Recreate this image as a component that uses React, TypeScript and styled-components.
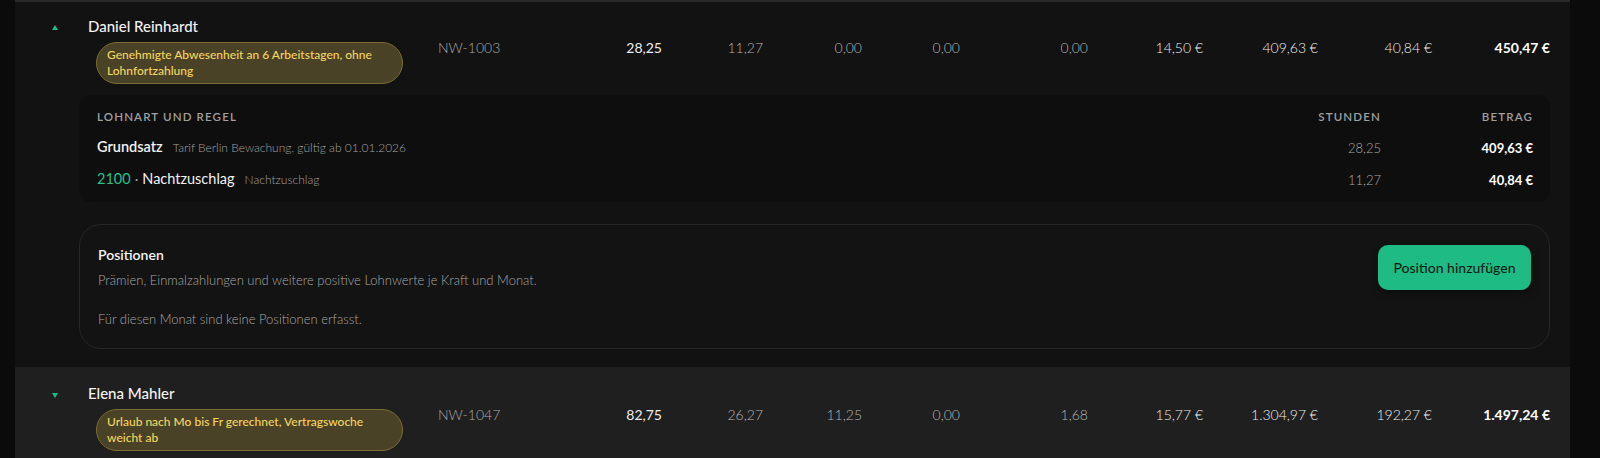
import React from "react";
import styled, { createGlobalStyle } from "styled-components";

const GlobalStyle = createGlobalStyle`
  html, body {
    margin: 0;
    padding: 0;
    background: #0b0b0b;
    overflow: hidden;
  }
  body {
    font-family: "Lato", "Noto Sans", sans-serif;
    color: #f0f0f0;
  }
  * { box-sizing: border-box; }
`;

const Page = styled.div`
  width: 1600px;
  height: 458px;
  padding: 0 30px 0 15px;
  background: #0b0b0b;
  overflow: hidden;
`;

const Table = styled.div`
  border-top: 2px solid #2a2a2a;
  display: flex;
  flex-direction: column;
`;

const Block = styled.div<{ $active?: boolean }>`
  background: ${(p) => (p.$active ? "#1f1f1f" : "#121212")};
`;

const MainRow = styled.div<{ $top: number }>`
  display: grid;
  grid-template-columns: 73px 350px 120px 104px 101px 99px 98px 128px 115px 115px 114px 118px;
  align-items: start;
  padding: ${(p) => p.$top}px 20px 11px 0;
`;

const ToggleCell = styled.div`
  padding: 9px 0 0 37px;
  height: 20px;
  display: flex;
`;

const NameCell = styled.div`
  display: flex;
  flex-direction: column;
  gap: 6px;
  align-items: flex-start;
`;

const Name = styled.div`
  font-size: 15px;
  line-height: 20px;
  font-weight: 500;
  color: #f3f3f3;
`;

const Badge = styled.div`
  width: 307px;
  margin-left: 8px;
  padding: 4px 10px;
  border-radius: 21px;
  border: 1px solid #7b6c33;
  background: #4a4227;
  color: #f4d562;
  font-size: 12px;
  line-height: 16px;
  font-weight: 500;
`;

const Code = styled.div`
  padding-top: 22px;
  font-size: 14px;
  line-height: 20px;
  color: #a9a9a9;
  font-weight: 300;
`;

const Num = styled.div<{ $tone: "strong" | "muted" | "money" | "total" }>`
  padding-top: 22px;
  line-height: 20px;
  text-align: right;
  font-size: 14px;
  font-variant-numeric: tabular-nums;
  color: ${(p) =>
    p.$tone === "muted" ? "#b4b4b4" : p.$tone === "total" ? "#ffffff" : "#ededed"};
  font-weight: ${(p) =>
    p.$tone === "total" ? 700 : p.$tone === "strong" ? 400 : 300};
`;

const Details = styled.div`
  display: flex;
  flex-direction: column;
  gap: 22px;
  padding: 0 20px 18px 64px;
`;

const RulesCard = styled.div`
  background: #0e0e0e;
  border-radius: 12px;
  padding: 15px 17px 12px 18px;
  display: grid;
  grid-template-columns: 1fr 150px 152px;
  row-gap: 11px;
  align-items: center;
`;

const HeadCell = styled.div<{ $right?: boolean }>`
  font-size: 11.5px;
  line-height: 14px;
  letter-spacing: 0.1em;
  text-transform: uppercase;
  font-weight: 600;
  color: #a0a0a0;
  text-align: ${(p) => (p.$right ? "right" : "left")};
  margin-bottom: 2px;
`;

const RuleLabel = styled.div`
  display: flex;
  align-items: baseline;
  line-height: 20px;
`;

const RuleTitle = styled.span<{ $bold?: boolean }>`
  font-size: 14.5px;
  color: #f2f2f2;
  font-weight: ${(p) => (p.$bold ? 600 : 400)};
`;

const RuleCode = styled.span`
  font-size: 14.5px;
  color: #22c28a;
`;

const Dot = styled.span`
  font-size: 14px;
  color: #9a9a9a;
  margin: 0 4px;
`;

const RuleDesc = styled.span`
  font-size: 12px;
  color: #a2a2a2;
  margin-left: 10px;
  font-weight: 300;
`;

const RuleHours = styled.div`
  text-align: right;
  font-size: 13px;
  color: #a8a8a8;
  font-weight: 300;
`;

const RuleAmount = styled.div`
  text-align: right;
  font-size: 13px;
  color: #ffffff;
  font-weight: 700;
`;

const PositionsCard = styled.div`
  border: 1px solid #262626;
  border-radius: 22px;
  background: #131313;
  padding: 20px 18px 20px 18px;
  display: flex;
  justify-content: space-between;
  align-items: flex-start;
`;

const PosText = styled.div`
  display: flex;
  flex-direction: column;
`;

const PosTitle = styled.div`
  font-size: 14px;
  line-height: 20px;
  font-weight: 600;
  color: #f3f3f3;
`;

const PosSub = styled.div<{ $gap: number }>`
  font-size: 13px;
  line-height: 18px;
  color: #a6a6a6;
  font-weight: 300;
  margin-top: ${(p) => p.$gap}px;
`;

const AddButton = styled.button`
  width: 153px;
  height: 45px;
  border: none;
  border-radius: 10px;
  background: #1fbb84;
  color: #0b1f15;
  font-family: inherit;
  font-size: 14px;
  font-weight: 500;
  box-shadow: 0 4px 10px rgba(0, 0, 0, 0.35);
  cursor: pointer;
`;

const Triangle = ({ up }: { up: boolean }) => (
  <svg width="6" height="5" viewBox="0 0 6 5" style={{ marginTop: up ? 0 : 1 }}>
    <path d={up ? "M3 0 L6 5 L0 5 Z" : "M0 0 L6 0 L3 5 Z"} fill="#1fbb84" />
  </svg>
);

type Emp = {
  name: string;
  note: string;
  code: string;
  vals: string[];
};

const EmployeeRow = ({ e, expanded, top }: { e: Emp; expanded: boolean; top: number }) => (
  <MainRow $top={top}>
    <ToggleCell>
      <Triangle up={expanded} />
    </ToggleCell>
    <NameCell>
      <Name>{e.name}</Name>
      <Badge>{e.note}</Badge>
    </NameCell>
    <Code>{e.code}</Code>
    <Num $tone="strong">{e.vals[0]}</Num>
    <Num $tone="muted">{e.vals[1]}</Num>
    <Num $tone="muted">{e.vals[2]}</Num>
    <Num $tone="muted">{e.vals[3]}</Num>
    <Num $tone="muted">{e.vals[4]}</Num>
    <Num $tone="money">{e.vals[5]}</Num>
    <Num $tone="money">{e.vals[6]}</Num>
    <Num $tone="money">{e.vals[7]}</Num>
    <Num $tone="total">{e.vals[8]}</Num>
  </MainRow>
);

const daniel: Emp = {
  name: "Daniel Reinhardt",
  note: "Genehmigte Abwesenheit an 6 Arbeitstagen, ohne Lohnfortzahlung",
  code: "NW-1003",
  vals: ["28,25", "11,27", "0,00", "0,00", "0,00", "14,50 €", "409,63 €", "40,84 €", "450,47 €"],
};

const elena: Emp = {
  name: "Elena Mahler",
  note: "Urlaub nach Mo bis Fr gerechnet, Vertragswoche weicht ab",
  code: "NW-1047",
  vals: ["82,75", "26,27", "11,25", "0,00", "1,68", "15,77 €", "1.304,97 €", "192,27 €", "1.497,24 €"],
};

export default function App() {
  return (
    <>
      <GlobalStyle />
      <Page>
        <Table>
          <Block>
            <EmployeeRow e={daniel} expanded top={14} />
            <Details>
              <RulesCard>
                <HeadCell>Lohnart und Regel</HeadCell>
                <HeadCell $right>Stunden</HeadCell>
                <HeadCell $right>Betrag</HeadCell>

                <RuleLabel>
                  <RuleTitle $bold>Grundsatz</RuleTitle>
                  <RuleDesc>Tarif Berlin Bewachung, gültig ab 01.01.2026</RuleDesc>
                </RuleLabel>
                <RuleHours>28,25</RuleHours>
                <RuleAmount>409,63 €</RuleAmount>

                <RuleLabel>
                  <RuleCode>2100</RuleCode>
                  <Dot>·</Dot>
                  <RuleTitle>Nachtzuschlag</RuleTitle>
                  <RuleDesc>Nachtzuschlag</RuleDesc>
                </RuleLabel>
                <RuleHours>11,27</RuleHours>
                <RuleAmount>40,84 €</RuleAmount>
              </RulesCard>

              <PositionsCard>
                <PosText>
                  <PosTitle>Positionen</PosTitle>
                  <PosSub $gap={6}>
                    Prämien, Einmalzahlungen und weitere positive Lohnwerte je Kraft und Monat.
                  </PosSub>
                  <PosSub $gap={21}>Für diesen Monat sind keine Positionen erfasst.</PosSub>
                </PosText>
                <AddButton>Position hinzufügen</AddButton>
              </PositionsCard>
            </Details>
          </Block>
          <Block $active>
            <EmployeeRow e={elena} expanded={false} top={16} />
          </Block>
        </Table>
      </Page>
    </>
  );
}
